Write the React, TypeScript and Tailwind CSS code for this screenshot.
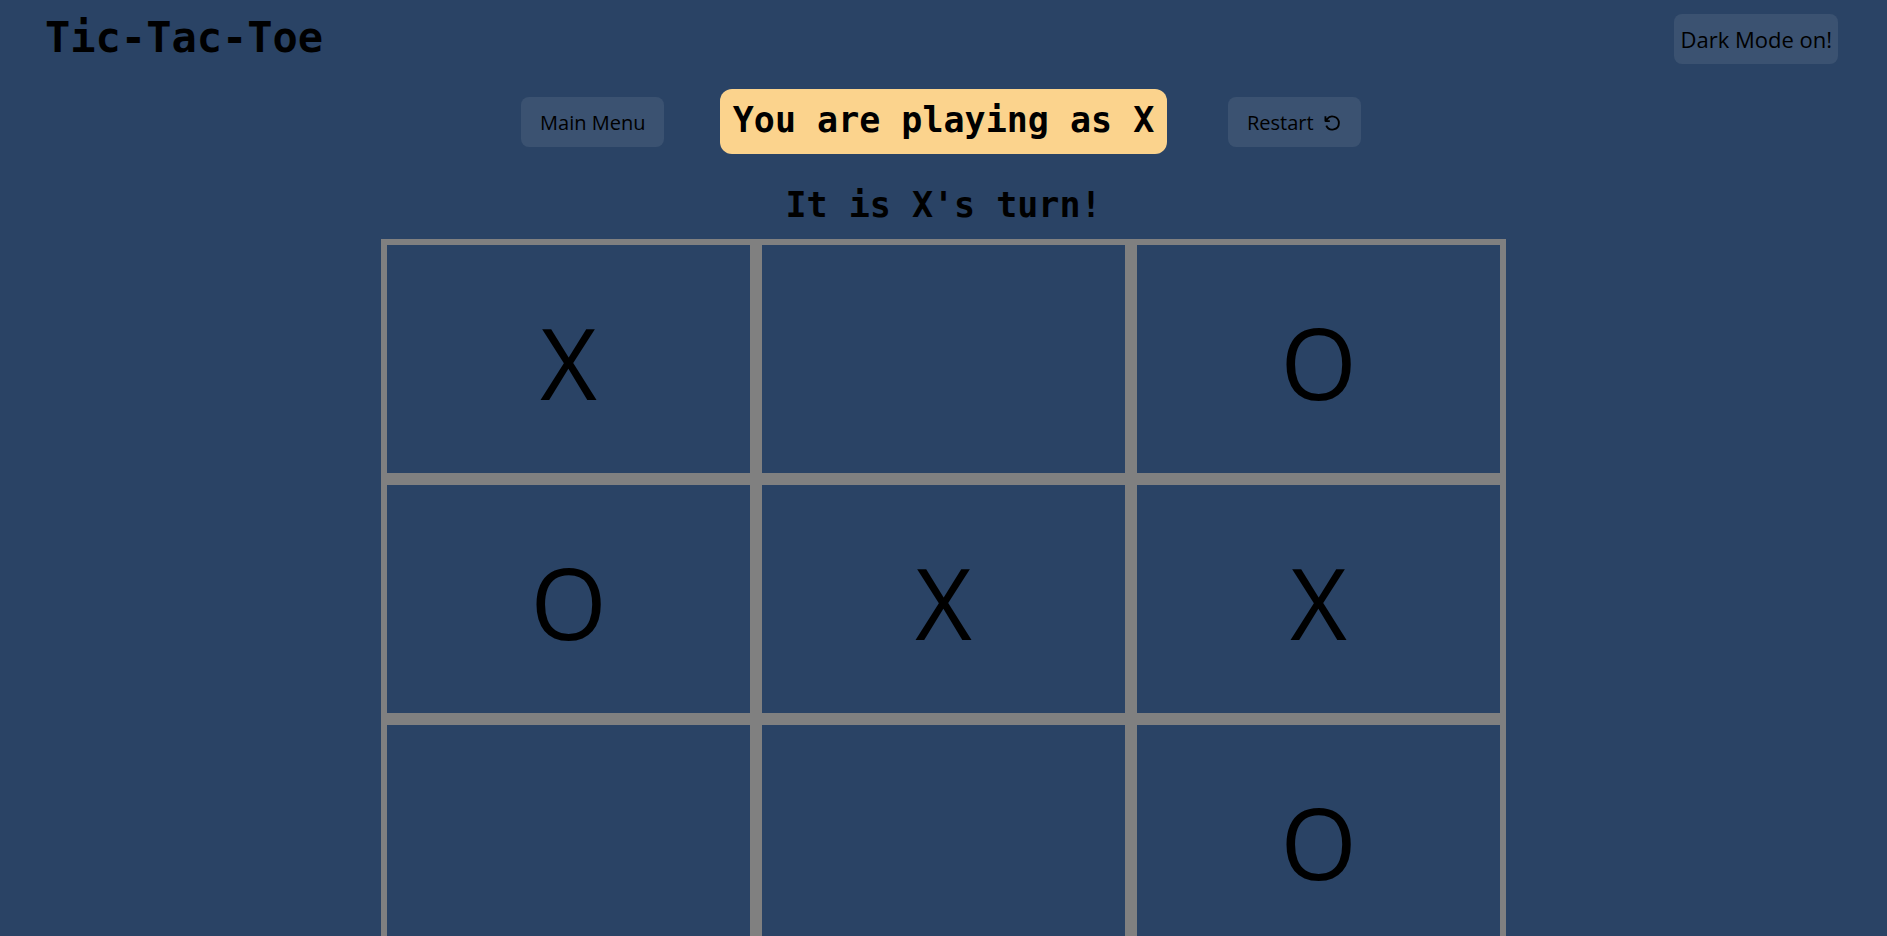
import { useState } from "react"
import { VscDebugRestart } from "react-icons/vsc"

const startingBoard = ["X", "", "O", "O", "X", "X", "", "", "O"]

const buttonStyle = "h-[50px] rounded-lg bg-[#3b5271] font-medium hover:bg-[#4a607d]"
const headingFont = "font-['DejaVu_Sans_Mono','Liberation_Mono',monospace] font-bold"

function Header() {
  return (
    <header className="flex items-start justify-between pt-[14px] pl-[45px] pr-[49px]">
      <h1 className={`${headingFont} text-[42px] leading-[48px]`}>Tic-Tac-Toe</h1>
      <button type="button" className={`${buttonStyle} px-[6px] text-[22px]`}>
        Dark Mode on!
      </button>
    </header>
  )
}

export default function App() {
  const [board, setBoard] = useState(startingBoard)
  const [turn, setTurn] = useState("X")

  const play = (index: number) => {
    if (board[index]) return
    setBoard(board.map((mark, i) => (i === index ? turn : mark)))
    setTurn(turn === "X" ? "O" : "X")
  }

  const restart = () => {
    setBoard(Array(9).fill(""))
    setTurn("X")
  }

  return (
    <div className="min-h-screen bg-[#2a4365] text-black font-['Open_Sans','Noto_Sans',sans-serif]">
      <Header />

      <main className="pt-[25px]">
        <div className="grid grid-cols-[254px_auto_254px] items-center justify-center justify-items-center">
          <button type="button" className={`${buttonStyle} px-[19px] pt-[2px] text-[20px]`}>
            Main Menu
          </button>
          <h2 className={`${headingFont} rounded-xl bg-[#fbd38d] px-[13px] pb-[2px] text-[35px] leading-[63px]`}>
            You are playing as X
          </h2>
          <button
            type="button"
            onClick={restart}
            className={`${buttonStyle} flex items-center gap-2 px-[19px] pt-[2px] text-[20px]`}
          >
            Restart
            <VscDebugRestart className="size-5" />
          </button>
        </div>

        <h2 className={`${headingFont} pt-[21px] pb-1 text-center text-[35px] leading-[60px]`}>
          It is {turn}'s turn!
        </h2>

        <div className="mx-auto grid w-full max-w-[1125px] grid-cols-3">
          {board.map((mark, i) => (
            <button
              key={i}
              type="button"
              aria-label={`Square ${i + 1} ${mark}`}
              onClick={() => play(i)}
              className="h-60 border-6 border-[#808080] pt-[6px] text-[98px] leading-none"
            >
              {mark}
            </button>
          ))}
        </div>
      </main>
    </div>
  )
}
